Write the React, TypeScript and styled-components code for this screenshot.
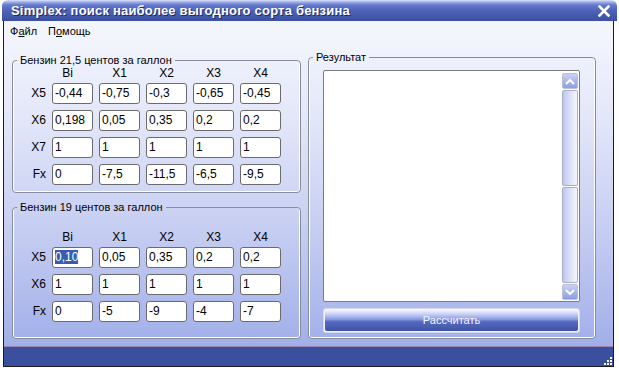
import React from 'react';
import styled, { createGlobalStyle } from 'styled-components';

const Global = createGlobalStyle`
  html, body { margin: 0; padding: 0; background: #ffffff; }
  body { font-family: "Liberation Sans", Arial, sans-serif; font-size: 12px; color: #000; }
  * { box-sizing: border-box; }
`;

const Window = styled.div`
  width: 615px;
  height: 367px;
  margin-left: 2px;
  display: flex;
  flex-direction: column;
`;

const TitleBar = styled.div`
  height: 21px;
  flex: none;
  border-radius: 6px 6px 0 0;
  background: linear-gradient(to bottom, #dfe5fb 0px, #9fb0ea 2px, #6478cc 5px, #4d62b6 11px, #3b4fa2 21px);
  display: flex;
  align-items: center;
  justify-content: space-between;
  padding: 0 7px 0 9px;
`;

const Title = styled.div`
  font-family: "Liberation Sans", Arial, sans-serif;
  font-weight: bold;
  font-size: 13px;
  letter-spacing: 0.2px;
  color: #ffffff;
  text-shadow: 1px 1px 0 #1d2a66;
  line-height: 21px;
  padding-bottom: 1px;
`;

const Frame = styled.div`
  flex: 1;
  display: flex;
  flex-direction: column;
  margin: 0 3px 0 1px;
  border: 1px solid #1c1c1c;
  border-top: none;
`;

const MenuBar = styled.div`
  height: 20px;
  flex: none;
  background: #f3f5fd;
  display: flex;
  align-items: center;
  gap: 11px;
  padding-left: 6px;
`;

const MenuItem = styled.span`
  font-size: 11px;
  u { text-decoration: underline; }
`;

const Body = styled.div`
  flex: 1;
  display: flex;
  gap: 7px;
  padding: 0 17px 7px 8px;
  background: linear-gradient(to bottom, #f2f4fd 0%, #dfe4f8 30%, #c3cbf1 65%, #a1afe9 100%);
`;

const LeftCol = styled.div`
  width: 289px;
  display: flex;
  flex-direction: column;
  gap: 7px;
  padding-top: 12px;
`;

const Group = styled.fieldset<{ $grow?: boolean }>`
  margin: 0;
  padding: 0;
  min-width: 0;
  border: 1px solid #878c9c;
  border-radius: 4px;
  box-shadow: inset 1px 0 0 #ffffff, inset -1px 0 0 #ffffff, inset 0 -1px 0 #ffffff;
  flex: ${(p) => (p.$grow ? 1 : 'none')};
  display: flex;
  flex-direction: column;
`;

const Legend = styled.legend<{ $offset: number }>`
  margin-left: ${(p) => p.$offset}px;
  padding: 0 3px;
  font-size: 11px;
  line-height: 14px;
`;

const Grid = styled.div<{ $top: number; $bottom: number; $rows: number }>`
  display: grid;
  grid-template-columns: 33px repeat(5, 41px);
  grid-template-rows: 10px repeat(${(p) => p.$rows}, 21px);
  column-gap: 6px;
  row-gap: 6px;
  padding: ${(p) => p.$top}px 0 ${(p) => p.$bottom}px 0;
`;

const Header = styled.div<{ $shift?: number }>`
  height: 12px;
  text-align: center;
  line-height: 12px;
  font-size: 12px;
  padding-right: ${(p) => p.$shift ?? 0}px;
`;

const RowLabel = styled.div`
  text-align: right;
  line-height: 21px;
  font-size: 12px;
`;

const Cell = styled.div`
  height: 21px;
  border: 1px solid #6b6b6b;
  border-radius: 3px;
  background: #ffffff;
  padding: 0 2px;
  line-height: 19px;
  font-size: 12px;
  white-space: nowrap;
  overflow: hidden;
`;

const Selected = styled.span`
  background: #3b5bb0;
  color: #ffffff;
`;

const RightCol = styled.div`
  flex: 1;
  display: flex;
  flex-direction: column;
  padding-top: 9px;
`;

const ResultInner = styled.div`
  flex: 1;
  display: flex;
  flex-direction: column;
  gap: 6px;
  padding: 6px 15px 5px 14px;
`;

const ResultBox = styled.div`
  flex: 1;
  border: 1px solid #7c7c7c;
  border-radius: 2px;
  background: #ffffff;
  display: flex;
  justify-content: flex-end;
  padding: 2px 1px 1px 0;
`;

const ScrollBar = styled.div`
  width: 16px;
  display: flex;
  flex-direction: column;
  gap: 1px;
`;

const ScrollButton = styled.div`
  height: 16px;
  flex: none;
  border: 1px solid #b9bfd8;
  border-radius: 2px;
  background: linear-gradient(to bottom, #c8d1f5, #8c9de0);
  display: flex;
  align-items: center;
  justify-content: center;
`;

const Track = styled.div<{ $size: number }>`
  flex: ${(p) => p.$size};
  border: 1px solid #a9aec6;
  border-radius: 2px;
  background: linear-gradient(to right, #bcc6f2 0%, #d9def8 45%, #f4f5fd 100%);
`;

const CalcButton = styled.div`
  height: 25px;
  flex: none;
  border: 1px solid #d5d9ea;
  border-radius: 3px;
  padding: 1px;
  background: #f4f5fb;
`;

const CalcFace = styled.div`
  height: 100%;
  border-radius: 2px;
  background: linear-gradient(to bottom, #f2f4ff 0%, #c8d0f6 20%, #8799e4 45%, #5468bd 56%, #4a5fb2 78%, #3c50a6 100%);
  color: #f2f4ff;
  text-align: center;
  line-height: 21px;
  font-size: 11px;
`;

const StatusBar = styled.div`
  height: 20px;
  flex: none;
  border-top: 1px solid #9b84ad;
  background: #3b4f9f;
  display: flex;
  justify-content: flex-end;
  align-items: flex-end;
`;

const Chevron = ({ up }: { up?: boolean }) => (
  <svg width="10" height="7" viewBox="0 0 10 7">
    <polyline
      points={up ? '1,6 5,2 9,6' : '1,1 5,5 9,1'}
      fill="none"
      stroke="#ffffff"
      strokeWidth="2"
    />
  </svg>
);

const CloseIcon = () => (
  <svg width="12" height="12" viewBox="0 0 12 12">
    <path d="M1.5 1.5 L10.5 10.5 M10.5 1.5 L1.5 10.5" stroke="#ffffff" strokeWidth="2.6" strokeLinecap="square" />
  </svg>
);

const Grip = () => {
  const dots: [number, number][] = [
    [8, 0],
    [5, 3], [8, 3],
    [2, 6], [5, 6], [8, 6],
  ];
  return (
    <svg width="11" height="9" viewBox="0 0 11 9">
      {dots.map(([x, y], i) => (
        <rect key={i} x={x} y={y} width="2" height="2" fill="#ffffff" />
      ))}
    </svg>
  );
};

const headers = ['Bi', 'X1', 'X2', 'X3', 'X4'];

type Row = { label: string; values: React.ReactNode[] };

const table1: Row[] = [
  { label: 'X5', values: ['-0,44', '-0,75', '-0,3', '-0,65', '-0,45'] },
  { label: 'X6', values: ['0,198', '0,05', '0,35', '0,2', '0,2'] },
  { label: 'X7', values: ['1', '1', '1', '1', '1'] },
  { label: 'Fx', values: ['0', '-7,5', '-11,5', '-6,5', '-9,5'] },
];

const table2: Row[] = [
  { label: 'X5', values: [<Selected key="s">0,10</Selected>, '0,05', '0,35', '0,2', '0,2'] },
  { label: 'X6', values: ['1', '1', '1', '1', '1'] },
  { label: 'Fx', values: ['0', '-5', '-9', '-4', '-7'] },
];

const Table = ({ rows, top, bottom }: { rows: Row[]; top: number; bottom: number }) => (
  <Grid $top={top} $bottom={bottom} $rows={rows.length}>
    <div />
    {headers.map((h, i) => (
      <Header key={h} $shift={i === 0 ? 10 : 0}>{h}</Header>
    ))}
    {rows.map((r) => (
      <React.Fragment key={r.label}>
        <RowLabel>{r.label}</RowLabel>
        {r.values.map((v, i) => (
          <Cell key={i}>{v}</Cell>
        ))}
      </React.Fragment>
    ))}
  </Grid>
);

export default function App() {
  return (
    <>
      <Global />
      <Window>
        <TitleBar>
          <Title>Simplex: поиск наиболее выгодного сорта бензина</Title>
          <CloseIcon />
        </TitleBar>
        <Frame>
          <MenuBar>
            <MenuItem>Ф<u>а</u>йл</MenuItem>
            <MenuItem>П<u>о</u>мощь</MenuItem>
          </MenuBar>
          <Body>
            <LeftCol>
              <Group>
                <Legend $offset={4}>Бензин 21,5 центов за галлон</Legend>
                <Table rows={table1} top={0} bottom={7} />
              </Group>
              <Group $grow>
                <Legend $offset={4}>Бензин 19 центов за галлон</Legend>
                <Table rows={table2} top={17} bottom={12} />
              </Group>
            </LeftCol>
            <RightCol>
              <Group $grow>
                <Legend $offset={4}>Результат</Legend>
                <ResultInner>
                  <ResultBox>
                    <ScrollBar>
                      <ScrollButton><Chevron up /></ScrollButton>
                      <Track $size={97} />
                      <Track $size={96} />
                      <ScrollButton><Chevron /></ScrollButton>
                    </ScrollBar>
                  </ResultBox>
                  <CalcButton>
                    <CalcFace>Рассчитать</CalcFace>
                  </CalcButton>
                </ResultInner>
              </Group>
            </RightCol>
          </Body>
          <StatusBar>
            <Grip />
          </StatusBar>
        </Frame>
      </Window>
    </>
  );
}
